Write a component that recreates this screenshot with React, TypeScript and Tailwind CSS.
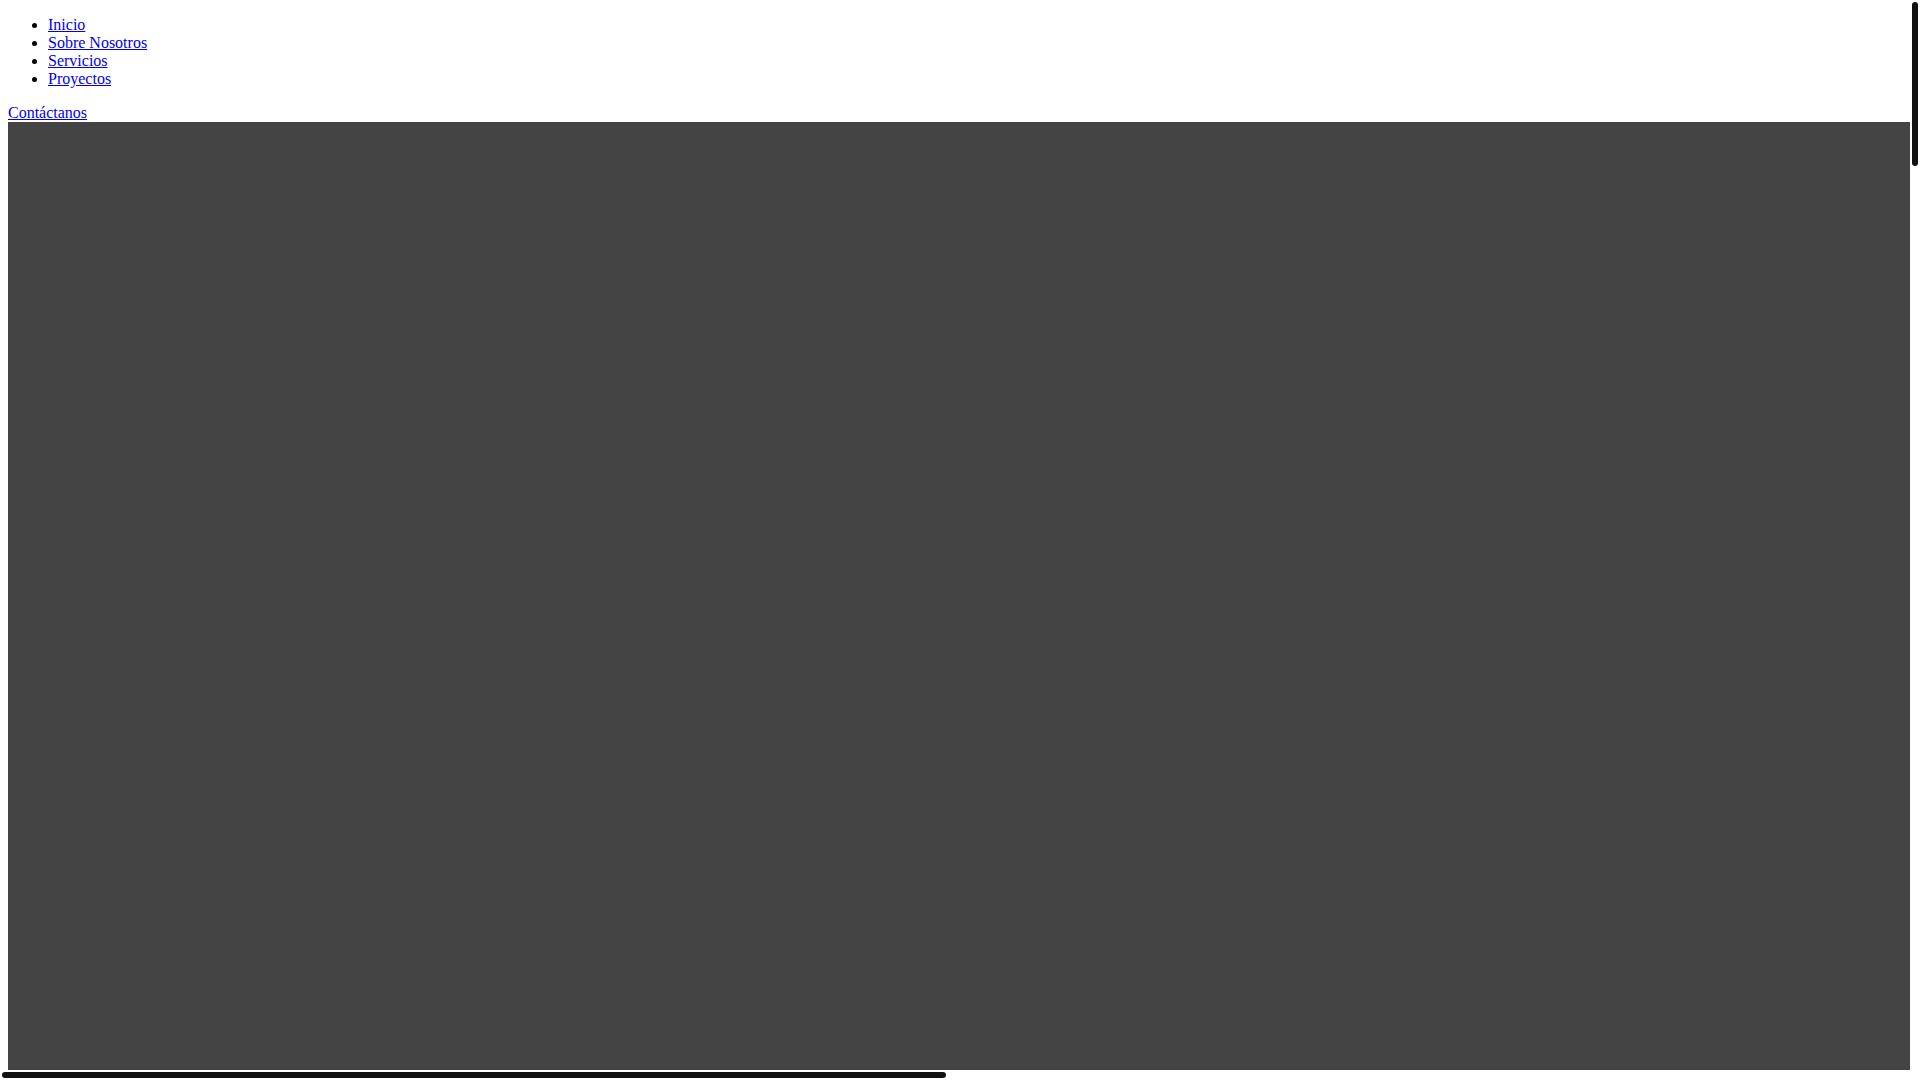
export default function App() {
	const links = ["Inicio", "Sobre Nosotros", "Servicios", "Proyectos"];
	return (
		<div className="flex h-screen w-screen flex-col overflow-hidden bg-white">
			<div className="flex h-[1070px]">
				{/* page viewport */}
				<div className="h-[1070px] w-[1910px] overflow-hidden">
					<div className="m-2 font-['Liberation_Serif',serif] text-base leading-[normal] text-black">
						<nav>
							<ul className="my-4 list-disc pl-10">
								{links.map((l) => (
									<li key={l}>
										<a href="#" className="text-[#0000ee] underline">
											{l}
										</a>
									</li>
								))}
							</ul>
						</nav>
						<div>
							<a href="#" className="text-[#0000ee] underline">
								Contáctanos
							</a>
						</div>
						<div className="h-[948px] w-[3840px] bg-[#444444]"></div>
					</div>
				</div>
				{/* vertical scrollbar */}
				<div className="w-[10px] px-[2px] pt-[2px]">
					<div className="h-[164px] w-[6px] rounded-full bg-[#111111]"></div>
				</div>
			</div>
			{/* horizontal scrollbar */}
			<div className="h-[10px] px-[2px] pt-[2px]">
				<div className="h-[6px] w-[944px] rounded-full bg-[#111111]"></div>
			</div>
		</div>
	);
}
